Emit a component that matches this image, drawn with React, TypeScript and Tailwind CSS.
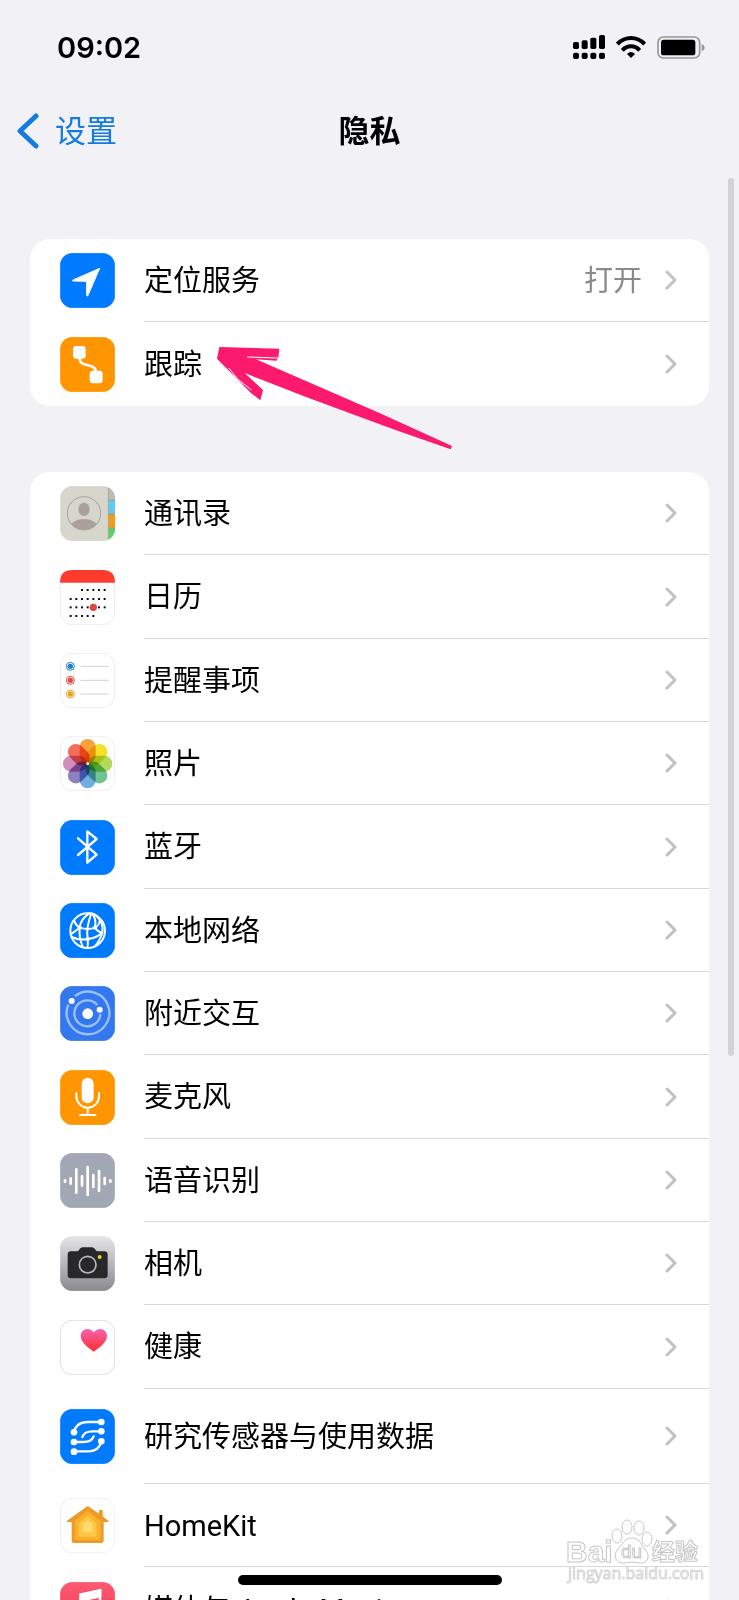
import React from "react";

interface Item {
  label: string;
  icon: React.ReactNode;
  value?: string;
  tall?: boolean;
}

function Tile({ fill, border, children }: { fill: string; border?: string; children?: React.ReactNode }) {
  return (
    <svg viewBox="0 0 165 165" className="size-[55px] shrink-0" aria-hidden="true">
      <rect x="1" y="1" width="163" height="163" rx="36" fill={fill} stroke={border ?? fill} strokeWidth="2" />
      {children}
    </svg>
  );
}

const white = { fill: "none", stroke: "#fff", strokeLinecap: "round", strokeLinejoin: "round" } as const;

const LocationIcon = () => (
  <Tile fill="#007aff">
    <path d="M119 46 39 81c-2 1-2 3 0 3l41 1v42c0 3 3 3 4 0z" fill="#fff" stroke="#fff" strokeWidth="3" strokeLinejoin="round" />
  </Tile>
);

const TrackingIcon = () => (
  <Tile fill="#ff9500">
    <rect x="39" y="27" width="38" height="38" rx="9" fill="#fff" />
    <rect x="89" y="101" width="39" height="38" rx="9" fill="#fff" />
    <path d="M59 64c1 30 45 12 49 39" {...white} strokeWidth="8" />
  </Tile>
);

const ContactsIcon = () => (
  <Tile fill="#d6d6cc">
    <clipPath id="contacts-tile">
      <rect width="165" height="165" rx="37" />
    </clipPath>
    <clipPath id="contacts-face">
      <circle cx="72" cy="82" r="50" />
    </clipPath>
    <g clipPath="url(#contacts-tile)">
      <path d="M146 0h19v42h-19z" fill="#bdbcb0" />
      <path d="M146 42h19v42h-19z" fill="#60c8f5" />
      <path d="M146 84h19v42h-19z" fill="#f59a16" />
      <path d="M146 126h19v39h-19z" fill="#56d364" />
      <path d="M145 0v165M146 42h19M146 84h19M146 126h19" stroke="#96958b" strokeWidth="2" />
    </g>
    <ellipse cx="72" cy="70" rx="17" ry="20" fill="#aaa19b" />
    <ellipse cx="72" cy="121" rx="40" ry="22" fill="#aaa19b" clipPath="url(#contacts-face)" />
    <circle cx="72" cy="82" r="50" fill="none" stroke="#aaa19b" strokeWidth="3" />
  </Tile>
);

const DOT_COLS = [32, 49, 66, 83, 100, 117, 134];
const DOT_ROWS = [
  { y: 60, from: 2, to: 6 },
  { y: 87, from: 0, to: 6 },
  { y: 112, from: 0, to: 6 },
  { y: 138, from: 0, to: 4 },
];

const CalendarIcon = () => (
  <Tile fill="#fff" border="#e4e4e6">
    <path d="M0 38C0 12 12 0 38 0h89c26 0 38 12 38 38z" fill="#ff3b30" />
    {DOT_ROWS.map((row) =>
      DOT_COLS.slice(row.from, row.to + 1).map((x) => (
        <rect key={`${x}-${row.y}`} x={x - 3} y={row.y - 3} width="6" height="6" fill="#111" />
      ))
    )}
    <circle cx="100" cy="112" r="11" fill="#e2473e" />
  </Tile>
);

const RemindersIcon = () => (
  <Tile fill="#fff" border="#e6e6e8">
    {[
      { y: 40, color: "#1f7fc9" },
      { y: 82, color: "#e24a43" },
      { y: 123, color: "#e8a020" },
    ].map(({ y, color }) => (
      <g key={y}>
        <circle cx="31" cy={y} r="12" fill="none" stroke={color} strokeWidth="3" />
        <circle cx="31" cy={y} r="8" fill={color} />
        <path d={`M62 ${y}h84`} stroke="#d2d2d4" strokeWidth="3" />
      </g>
    ))}
  </Tile>
);

const PETALS = ["#f8a23c", "#f2e22e", "#b5d95c", "#6ec494", "#72ade2", "#8d80c0", "#d08dbd", "#f26d5e"];

const PhotosIcon = () => (
  <Tile fill="#fff" border="#e6e6e8">
    <g className="isolate">
      {PETALS.map((color, i) => (
        <rect
          key={color}
          x="59"
          y="9"
          width="48"
          height="73"
          rx="24"
          fill={color}
          className="mix-blend-multiply"
          transform={`rotate(${i * 45} 83 83)`}
        />
      ))}
    </g>
    <circle cx="83" cy="83" r="4" fill="#fff" />
  </Tile>
);

const BluetoothIcon = () => (
  <Tile fill="#007aff">
    <path d="M54 55 110 104 82 128V34l28 23-56 48" {...white} strokeWidth="7" />
  </Tile>
);

const NetworkIcon = () => (
  <Tile fill="#007aff">
    <g {...white} strokeWidth="6">
      <circle cx="83" cy="83" r="52" />
      <path d="M88 31C68 44 60 58 59 74c-2 20 1 38 9 57" />
      <path d="M94 31c-9 24-16 50-11 77 1 9 1 18-1 27" />
      <path d="M97 32c10 13 12 26 7 42" />
      <path d="M103 34c22 15 28 38 24 56-5 14-12 28-21 38" />
      <path d="M42 52c4 12 10 18 17 22 16 5 32 5 46 0 9-5 13-12 14-20" />
      <path d="M32 94c10-7 18-13 27-20M35 102c16 8 32 9 49 6 17-2 31-8 42-18M105 74c5 8 12 13 21 16" />
    </g>
    <circle cx="59" cy="74" r="6" fill="#fff" />
    <circle cx="105" cy="74" r="6" fill="#fff" />
    <circle cx="84" cy="108" r="6" fill="#fff" />
  </Tile>
);

const NearbyIcon = () => (
  <Tile fill="#3478f0">
    <g fill="none" stroke="#9cc0fb" strokeWidth="7">
      <path d="M45 30a64 64 0 1 1-20 26" />
      <path d="M121 84a39 39 0 1 1-9-27" />
    </g>
    <circle cx="83" cy="83" r="16" fill="#fff" />
    <circle cx="35" cy="45" r="9" fill="#fff" />
    <circle cx="119" cy="71" r="9" fill="#fff" />
  </Tile>
);

const MicIcon = () => (
  <Tile fill="#ff9500">
    <rect x="65" y="23" width="36" height="77" rx="18" fill="#fff" />
    <path d="M49 69v10a34 34 0 0 0 68 0V69M83 114v20M60 135h46" {...white} strokeWidth="6" />
  </Tile>
);

const WAVE = [2, 8, 35, 14, 42, 18, 30, 9, 2];

const SpeechIcon = () => (
  <Tile fill="#a1a7b3">
    {WAVE.map((h, i) => (
      <path key={i} d={`M${15 + i * 17} ${84 - h}v${h * 2}`} {...white} strokeWidth="8" />
    ))}
  </Tile>
);

const CameraIcon = () => (
  <Tile fill="url(#camera-bg)">
    <linearGradient id="camera-bg" x1="0" y1="0" x2="0" y2="1">
      <stop offset="0" stopColor="#e4e4e9" />
      <stop offset="1" stopColor="#8b8a90" />
    </linearGradient>
    <path
      d="M33 46h18c7 0 8-12 17-12h28c9 0 10 12 17 12h20q10 0 10 10v61q0 10-10 10H33q-10 0-10-10V56q0-10 10-10z"
      fill="#28282a"
    />
    <circle cx="83" cy="86" r="25" fill="none" stroke="#b9b9bd" strokeWidth="5" />
    <circle cx="119" cy="63" r="6" fill="#f5cd1c" />
  </Tile>
);

const HealthIcon = () => (
  <Tile fill="#fff" border="#cfcfd2">
    <linearGradient id="heart" x1="0" y1="0" x2="0" y2="1">
      <stop offset="0" stopColor="#f562b4" />
      <stop offset="1" stopColor="#fd2f2c" />
    </linearGradient>
    <path d="M101 95C83 82 62 67 62 48c0-12 9-21 20-21 8 0 15 4 19 10 5-6 12-10 20-10 11 0 20 9 20 21 0 19-21 34-40 47z" fill="url(#heart)" />
  </Tile>
);

const SensorIcon = () => (
  <Tile fill="#007aff">
    <path
      d="M124 39H84C60 39 46 50 42 70M124 67H98c-18 0-26 4-31 17M42 99h28c16 0 26-4 31-17M42 127h43c24 0 35-11 39-30"
      {...white}
      strokeWidth="7"
    />
    {[[124, 39], [42, 70], [124, 67], [42, 99], [42, 128], [124, 97]].map(([x, y]) => (
      <circle key={`${x}-${y}`} cx={x} cy={y} r="10" fill="#fff" />
    ))}
  </Tile>
);

const HomeIcon = () => (
  <Tile fill="#fff" border="#e8e8ea">
    <path d="M83 24 21 68q-2 4 3 4h11v56q0 7 7 7h82q7 0 7-7V72h11q5 0 3-4l-17-13V38q0-2-2-2h-7q-2 0-2 2v9z" fill="#ed9a27" />
    <path d="M83 38 44 69v50q0 7 6 7h66q6 0 6-7V69z" fill="#f9b02c" />
    <path d="M83 53 56 75v36q0 5 5 5h44q5 0 5-5V75z" fill="#fec643" />
    <path d="M83 67 68 79v24h30V79z" fill="#ffdb70" />
  </Tile>
);

const MusicIcon = () => (
  <Tile fill="url(#music-bg)">
    <linearGradient id="music-bg" x1="0" y1="0" x2="0" y2="1">
      <stop offset="0" stopColor="#fa5b72" />
      <stop offset="1" stopColor="#fa2f48" />
    </linearGradient>
    <path d="M62 118V38l58-13v80" fill="none" stroke="#fff" strokeWidth="8" />
    <path d="M58 36l66-14v24L58 60z" fill="#fff" />
    <ellipse cx="52" cy="120" rx="15" ry="12" fill="#fff" />
    <ellipse cx="110" cy="107" rx="15" ry="12" fill="#fff" />
  </Tile>
);

const services: Item[] = [
  { label: "定位服务", icon: <LocationIcon />, value: "打开" },
  { label: "跟踪", icon: <TrackingIcon /> },
];

const apps: Item[] = [
  { label: "通讯录", icon: <ContactsIcon /> },
  { label: "日历", icon: <CalendarIcon /> },
  { label: "提醒事项", icon: <RemindersIcon /> },
  { label: "照片", icon: <PhotosIcon /> },
  { label: "蓝牙", icon: <BluetoothIcon /> },
  { label: "本地网络", icon: <NetworkIcon /> },
  { label: "附近交互", icon: <NearbyIcon /> },
  { label: "麦克风", icon: <MicIcon /> },
  { label: "语音识别", icon: <SpeechIcon /> },
  { label: "相机", icon: <CameraIcon /> },
  { label: "健康", icon: <HealthIcon /> },
  { label: "研究传感器与使用数据", icon: <SensorIcon />, tall: true },
  { label: "HomeKit", icon: <HomeIcon /> },
  { label: "媒体与 Apple Music", icon: <MusicIcon /> },
];

function Row({ label, icon, value, tall }: Item) {
  return (
    <li className={tall ? "group h-[95px]" : "group h-[83px] nth-[3n+2]:h-[84px]"}>
      <a href="#" className="flex h-full items-center gap-[29px] pl-[30px]">
        {icon}
        <span className="flex h-full flex-1 items-center border-b border-[#d8d8db] pr-[32px] group-last:border-b-0">
          <span className="flex-1 pt-[2px]">{label}</span>
          {value && <span className="mr-[23px] pt-[2px] text-[#8a8a8e]">{value}</span>}
          <svg viewBox="0 0 12 20" className="h-5 w-3" aria-hidden="true">
            <path d="M2 2l8 8-8 8" fill="none" stroke="#c1c1c4" strokeWidth="3" strokeLinecap="round" strokeLinejoin="round" />
          </svg>
        </span>
      </a>
    </li>
  );
}

function Card({ items, children }: { items: Item[]; children?: React.ReactNode }) {
  return (
    <section className="relative mx-[30px] rounded-[20px] bg-white">
      <ul>
        {items.map((item) => (
          <Row key={item.label} {...item} />
        ))}
      </ul>
      {children}
    </section>
  );
}

function StatusBar() {
  return (
    <div className="flex h-[94px] items-center justify-between pr-[34px] pl-[57px] font-['Inter',sans-serif]">
      <time className="leading-none font-semibold">09:02</time>
      <div className="flex items-center gap-[11px]">
        <svg viewBox="0 0 96 72" className="h-6 w-8" aria-hidden="true">
          {[21, 16, 8, 0].map((top, i) => (
            <g key={top}>
              <rect x={i * 26} y={top} width="18" height={42 - top} rx="5" />
              <rect x={i * 26} y="53" width="18" height="19" rx="6" />
            </g>
          ))}
        </svg>
        <svg viewBox="0 0 90 66" className="h-[22px] w-[30px]" fill="none" stroke="#000" strokeWidth="12" aria-hidden="true">
          <path d="M4 24Q22 6 45 6t41 18" />
          <path d="M19 43Q30 31 45 31t26 12" />
          <path d="M33 54q12-12 24 0L45 66z" fill="#000" stroke="none" />
        </svg>
        <svg viewBox="0 0 144 69" className="h-[23px] w-12" aria-hidden="true">
          <rect x="3" y="3" width="125" height="63" rx="16" fill="none" stroke="#98989c" strokeWidth="5" />
          <rect x="12" y="11" width="103" height="47" rx="8" />
          <path d="M134 24q9 4 9 11t-9 11z" fill="#98989c" />
        </svg>
      </div>
    </div>
  );
}

function Arrow() {
  return (
    <svg viewBox="588 348 708 312" className="pointer-events-none absolute top-[107px] left-[186px] h-[104px] w-[236px]" aria-hidden="true">
      <path
        d="M598 351 778 356 775 384 769 392 708 388 870 458 1080 550 1296 648 1292 658 1120 598 860 502 674 429 729 480 721 511 692 488 591 386z"
        fill="#fb1a6e"
      />
      <path d="M682 381l92 3M626 414l28 34 40 32" fill="none" stroke="#fff" strokeWidth="3" />
    </svg>
  );
}

function Watermark() {
  return (
    <svg
      viewBox="0 0 140 68"
      className="pointer-events-none absolute right-[34px] bottom-[14px] h-[68px] w-[140px]"
      fill="#fff"
      stroke="#c6c6c8"
      strokeWidth="1"
      aria-hidden="true"
    >
      <g className="font-['Liberation_Sans','Noto_Sans_CJK_SC',sans-serif] font-bold">
        <text x="1" y="44" fontSize="30">Bai</text>
        <text x="87" y="42" fontSize="23">经验</text>
      </g>
      <ellipse cx="52" cy="18" rx="5" ry="7" />
      <ellipse cx="62" cy="9" rx="5" ry="7" />
      <ellipse cx="74" cy="10" rx="5" ry="7" />
      <ellipse cx="82" cy="21" rx="5" ry="7" />
      <path d="M67 20c8 0 9 7 13 11 5 5 4 14-4 14-4 0-6-1-9-1s-5 1-9 1c-8 0-10-9-5-14 4-4 6-11 14-11z" />
      <text x="56" y="40" fontSize="19" className="font-['Liberation_Sans',sans-serif]">du</text>
      <text x="3" y="61" fontSize="16" stroke="#d6d6d8" className="font-['Open_Sans',sans-serif]">jingyan.baidu.com</text>
    </svg>
  );
}

export default function App() {
  return (
    <div className="relative h-screen overflow-hidden bg-[#f1f1f6] font-['Roboto','Noto_Sans_CJK_SC',sans-serif] text-[29px] leading-none text-black">
      <StatusBar />
      <header className="grid h-[74px] grid-cols-3 items-center px-4 text-[31px]">
        <a href="#" className="flex items-center gap-4 text-[#147be0]">
          <svg viewBox="0 0 23 36" className="h-9 w-[23px]" aria-hidden="true">
            <path d="M20 3L4 18l16 15" fill="none" stroke="currentColor" strokeWidth="5" strokeLinecap="round" strokeLinejoin="round" />
          </svg>
          设置
        </a>
        <h1 className="text-center font-bold">隐私</h1>
      </header>

      <main className="flex flex-col gap-[66px] pt-[71px]">
        <Card items={services}>
          <Arrow />
        </Card>
        <Card items={apps} />
      </main>

      {/* scroll indicator */}
      <div className="absolute top-[178px] right-[5px] h-[878px] w-[6px] rounded-full bg-[#d2d2d7]" />
      <Watermark />
      {/* home indicator */}
      <div className="absolute bottom-[15px] left-1/2 h-[10px] w-[264px] -translate-x-1/2 rounded-full bg-black" />
    </div>
  );
}
